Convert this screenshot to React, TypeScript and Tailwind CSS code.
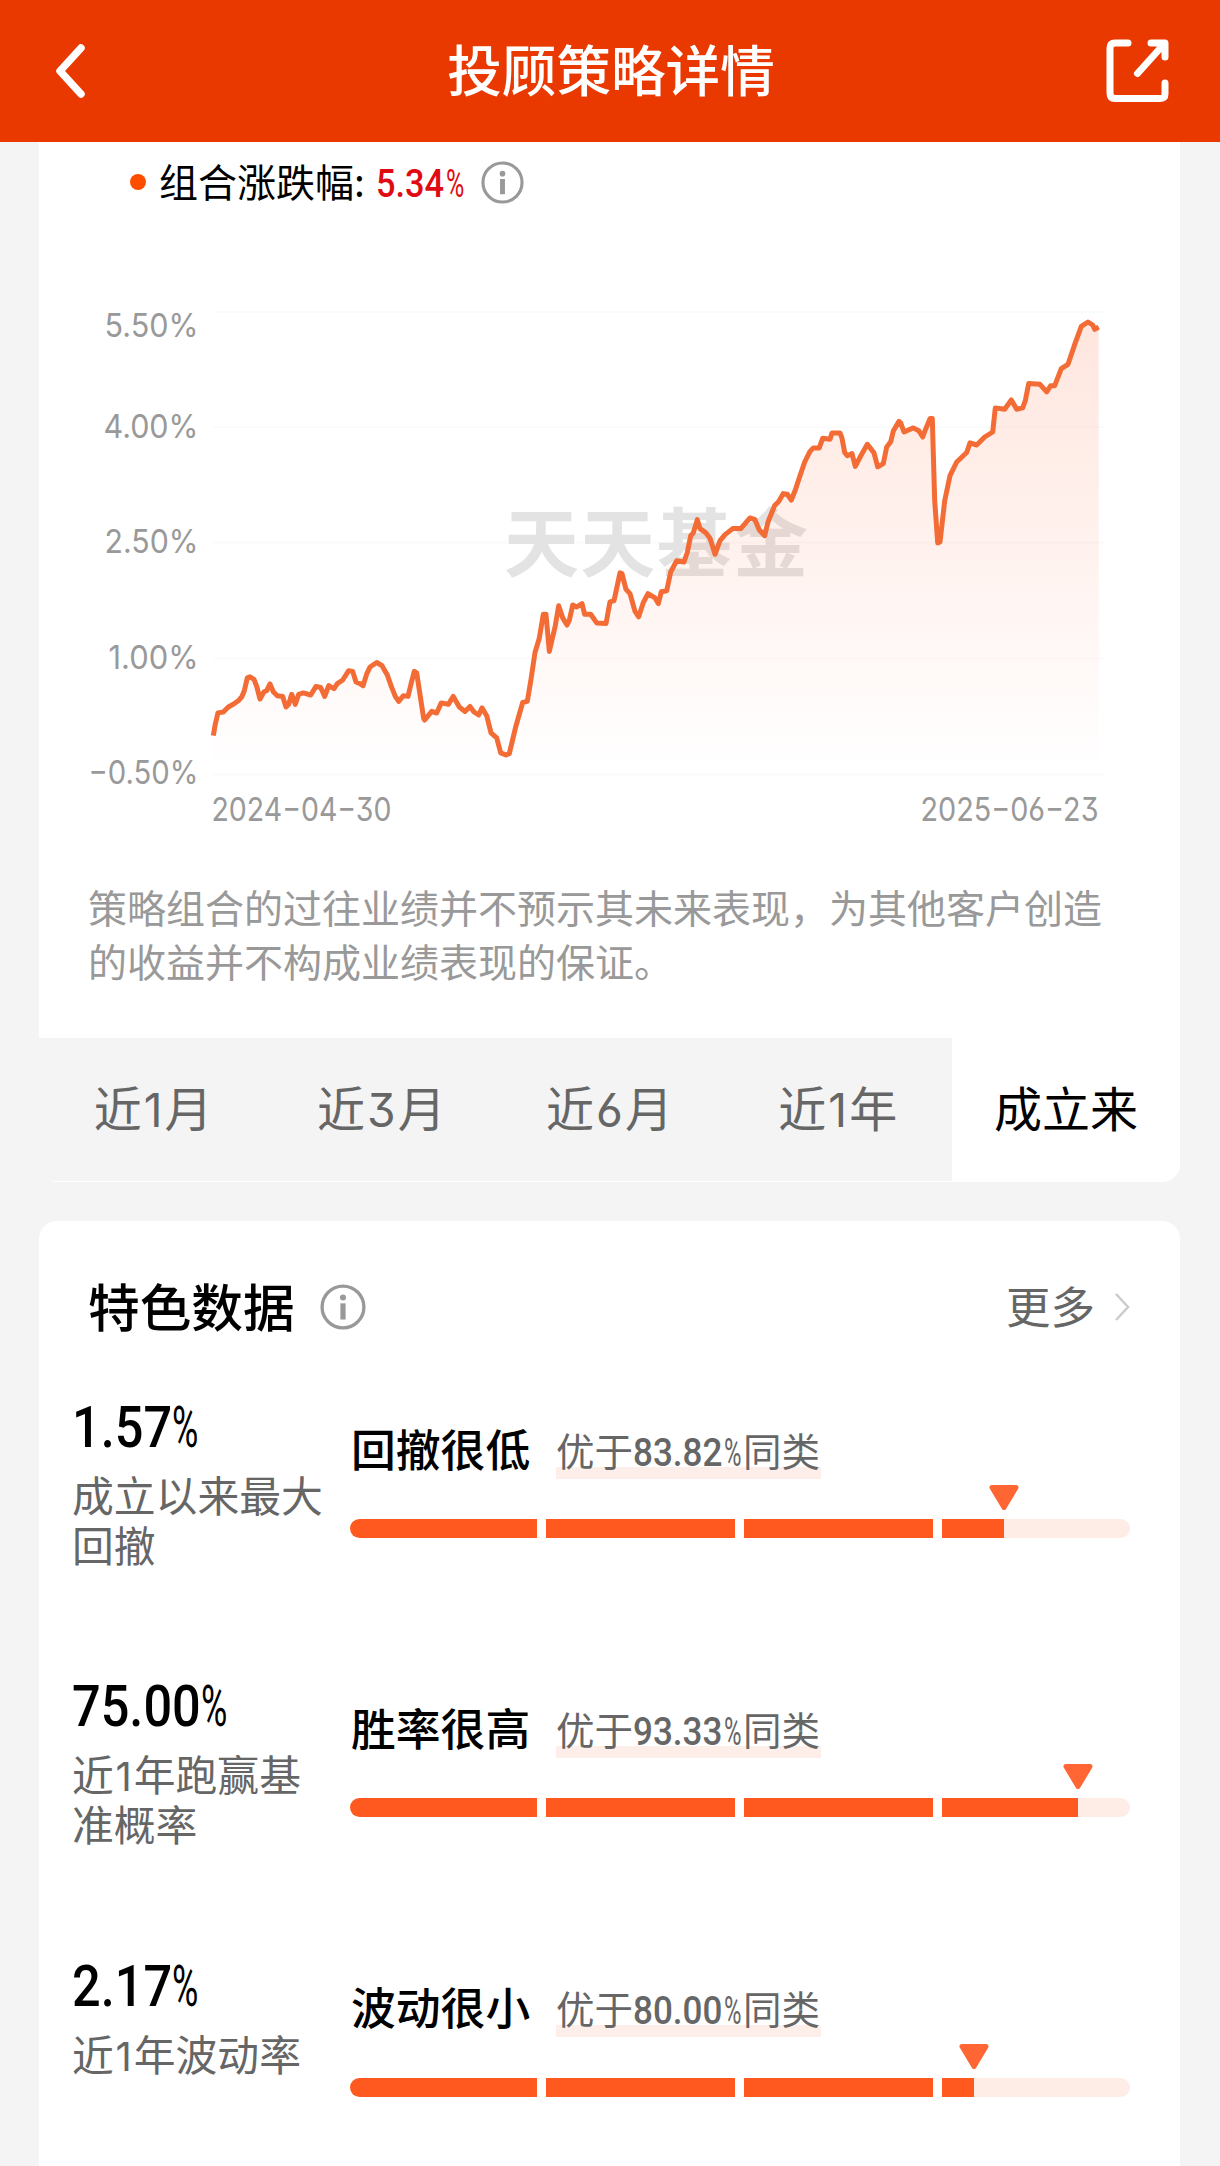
import React from "react";

const POINTS =
  "213.3,735.7 215.3,724 218,712.9 223.3,712 228.3,707 233.3,704.3 238.3,700.7 241.7,697 244.3,690.7 247.3,677.9 250,676.8 254,679.3 256.7,686.4 260,699 264,691.8 266.7,690.7 270,683.9 273.3,691.8 277.3,695.7 282.7,696.4 286,707 288.7,704.3 291.7,694.3 295.3,704.3 298.7,694.3 303.3,692.9 310.7,695 316,686.4 320.7,687.5 324.7,696.4 328.7,685.7 334,688.6 337.3,683.6 342.7,680 348.7,670.7 352.7,671.4 356,682 360,683.6 363,685.7 366.7,673.9 370,667 376.7,662.5 382,665.7 387.3,675 391.3,686.4 395.3,696.4 398.7,701.4 403.3,695.7 408,696.4 411.3,682.9 414.3,671.4 416.7,672.9 419.3,690 423.7,718.6 424.7,720 431.7,711.4 436.7,713 441.3,702.9 448.3,704.3 453.3,696.4 459.3,707 465,711.4 470,706.4 474,712 478.7,715 482,707.9 486.7,715.7 491,732.9 496.7,737.9 500.7,752.9 506,755 509.3,753.6 516,725.7 522.7,702.5 527.3,701.4 531,679.3 535,652.5 539.3,638.2 543.3,614.3 546,614.3 549.3,651.4 555.3,625.7 558.7,605.7 562.7,617.9 567,625 569.3,620.4 572.7,605 576.7,607 582,603.6 584.7,614.3 590.7,614.3 596.7,622.9 606,623.6 610,601.8 614,600.7 620,572.9 622,573.6 626,589.3 630,593.6 635,611.4 638.7,616.8 643.3,602.5 648,593.6 655,597.9 658.3,603.6 661.3,591.8 666.7,590.7 670.7,572 676.7,560.7 684,562 687.3,552.5 690.7,535.7 693.3,532.9 697.3,519.6 700,528.6 706,532.9 710,538.2 715,554.3 720,540.7 725,534.6 732.7,528.6 740.7,528.6 750,517.9 754.7,519.3 759.3,530 764.7,535.7 768,522 774.7,505.4 778.7,501.4 783.3,493.6 787.3,494.3 791.3,500 795.3,490 800,475.7 804.7,462 810,451.4 813.3,447.9 819.3,447.9 822.7,438.2 830,439.3 832,432.9 840,432.9 842,438.2 844.7,452.5 847.3,455.7 852,453.6 855.3,466.4 860.7,456 867.3,444.3 874,452.9 877.7,466.8 883.3,463.6 886.7,447 890.7,441.8 893.3,431 899,421.4 900.7,422.9 904,432 913.3,427.9 918.7,430.7 922.7,437 925.3,430 930,418.6 932.3,418.6 934.7,500.7 937.7,542.9 940,542 944.7,500.7 950,475.7 956.7,462 966.7,452.5 970,442.9 976.7,445 984.7,437 992.7,432 995.3,407.9 1004.7,409.3 1011.3,400 1016.7,409.3 1022.7,407.9 1025.3,400.7 1028.7,383.6 1040,384.3 1046.7,391.8 1050.7,385.7 1054.7,385.7 1061.3,368.6 1068,364.3 1075,343.6 1081.3,326.4 1088,322 1092.7,325 1094.7,329.3 1098.7,327";

const Y_LABELS = [
  { text: "5.50%", y: 337, width: 94 },
  { text: "4.00%", y: 437.5, width: 95 },
  { text: "2.50%", y: 553, width: 94 },
  { text: "1.00%", y: 668.5, width: 90 },
  { text: "−0.50%", y: 784, width: 110 },
];

const GRID = [312, 427, 542.5, 658.5, 774.5];

const TABS = ["近1月", "近3月", "近6月", "近1年", "成立来"];

const ROWS = [
  { value: "1.57", wide: false, label: ["成立以来最大", "回撤"], title: "回撤很低", better: "83.82", fill: 83.82 },
  { value: "75.00", wide: true, label: ["近1年跑赢基", "准概率"], title: "胜率很高", better: "93.33", fill: 93.33 },
  { value: "2.17", wide: false, label: ["近1年波动率"], title: "波动很小", better: "80.00", fill: 80 },
];

function InfoIcon({ className }: { className: string }) {
  return (
    <svg className={className} viewBox="0 0 44 44" fill="none">
      <circle cx="22" cy="22" r="20" stroke="#999" strokeWidth="3.2" />
      <circle cx="22" cy="13" r="2.9" fill="#999" />
      <path d="M22 18.5V34" stroke="#999" strokeWidth="5" />
    </svg>
  );
}

/** Sets Arabic digits inside Chinese text in a geometric face. */
function Mixed({ text }: { text: string }) {
  return (
    <>
      {text.split(/(\d+)/).map((part, i) =>
        /^\d+$/.test(part) ? (
          <span
            key={i}
            className="mx-[0.045em] font-['Inter'] text-[0.96em] leading-none [font-feature-settings:'cv09','cv03']"
          >
            {part}
          </span>
        ) : (
          part
        ),
      )}
    </>
  );
}

function Chart() {
  return (
    <svg className="block h-[620px] w-[1141px]" viewBox="39 220 1141 620">
      <defs>
        <linearGradient id="area" gradientUnits="userSpaceOnUse" x1="0" y1="322" x2="0" y2="770">
          <stop offset="0" stopColor="#ff5a28" stopOpacity="0.15" />
          <stop offset="0.5" stopColor="#ff5a28" stopOpacity="0.08" />
          <stop offset="1" stopColor="#ff5a28" stopOpacity="0" />
        </linearGradient>
      </defs>
      {GRID.map((y) => (
        <path key={y} d={`M213 ${y}H1104`} stroke="#fbfbfb" strokeWidth="2" />
      ))}
      <text
        x="504"
        y="571"
        textLength="304"
        fill="#e3e3e3"
        className="font-['Noto_Sans_CJK_SC',sans-serif] text-[75px] font-bold"
      >
        天天基金
      </text>
      <polygon points={`213.3,770 ${POINTS} 1098.7,770`} fill="url(#area)" />
      <polyline points={POINTS} fill="none" stroke="#f36c36" strokeWidth="5" strokeLinejoin="round" />
      <g
        fill="#999"
        className="font-['Inter',sans-serif] text-[32.5px] [font-feature-settings:'cv09','cv03']"
      >
        {Y_LABELS.map((l) => (
          <text key={l.text} x="198.500" y={l.y} textAnchor="end" textLength={l.width} lengthAdjust="spacingAndGlyphs">
            {l.text}
          </text>
        ))}
        <text x="211.500" y="821" textLength="180" lengthAdjust="spacingAndGlyphs">
          2024−04−30
        </text>
        <text x="920.500" y="821" textLength="178" lengthAdjust="spacingAndGlyphs">
          2025−06−23
        </text>
      </g>
    </svg>
  );
}

function Bar({ fill }: { fill: number }) {
  return (
    <div className="mt-[7.500px] w-[780px]">
      <div className="h-[25px]" style={{ paddingLeft: `${fill}%` }}>
        <svg className="-ml-[15px] h-[25px] w-[30px]" viewBox="0 0 30 25">
          <path d="M3 2.5H27L15 22.5Z" fill="#ff6633" stroke="#ff6633" strokeWidth="5" strokeLinejoin="round" />
        </svg>
      </div>
      <div className="mt-[9px] grid h-[19px] grid-cols-[187px_189px_189px_188px] gap-[9px] overflow-hidden rounded-full">
        {[
          [0, 187],
          [196, 189],
          [394, 189],
          [592, 188],
        ].map(([start, width]) => (
          <div key={start} className="bg-[#fdede6]">
            <div
              className="h-full bg-[#ff591f]"
              style={{ width: Math.max(0, Math.min(width, (fill / 100) * 780 - start)) }}
            />
          </div>
        ))}
      </div>
    </div>
  );
}

export default function App() {
  return (
    <div className="h-[2166px] w-[1220px] overflow-hidden bg-[#f4f4f4] font-['Noto_Sans_CJK_SC',sans-serif] text-black">
      <header className="flex h-[142px] items-center justify-between bg-[#e93800] pl-[52px] pr-[48px] text-white">
        <svg className="h-[60px] w-[68px]" viewBox="0 0 68 60" fill="none">
          <path d="M29 7L8 30L29 53" stroke="#fff" strokeWidth="7.5" strokeLinecap="round" strokeLinejoin="round" />
        </svg>
        <h1 className="pb-[7px] text-[54.600px] font-medium leading-[80px]">投顾策略详情</h1>
        <svg className="mb-[3px] h-[70px] w-[70px]" viewBox="0 0 70 70" fill="none">
          <path
            d="M26 8H13Q8 8 8 13V58Q8 63.500 13 63.500H57.500Q63 63.500 63 59V48M49 8H63V22M62 9L35.500 38.500"
            stroke="#fff"
            strokeWidth="7"
            strokeLinecap="round"
            strokeLinejoin="round"
          />
        </svg>
      </header>

      <main className="pl-[39px] pr-[40px]">
        <section className="overflow-hidden rounded-b-[18px] bg-white">
          <div className="flex h-[78px] items-center pl-[91px]">
            <span className="mt-[2px] size-[16px] rounded-full bg-[#ff4d00]" />
            <p className="ml-[13px] mt-[2px] flex items-baseline whitespace-nowrap text-[39px] leading-[60px]">
              组合涨跌幅:
              <span className="ml-[11px] flex font-['Roboto'] font-medium text-[#e00b12]">
                <span className="w-[70px] origin-left scale-x-[0.88]">5.34</span>
                <span className="w-[18px] origin-left scale-x-[0.64] font-normal">%</span>
              </span>
            </p>
            <InfoIcon className="ml-[17px] mt-[2px] size-[43px]" />
          </div>
          <Chart />
          <p className="pl-[49px] pt-[40px] text-[39px] leading-[53.7px] text-[#999]">
            策略组合的过往业绩并不预示其未来表现，为其他客户创造
            <br />
            的收益并不构成业绩表现的保证。
          </p>
          <nav className="mt-[50.600px] grid h-[144px] grid-cols-5 pb-px text-[48px]">
            {TABS.map((t, i) => (
              <div
                key={t}
                className={
                  i === 4
                    ? "flex items-center justify-center bg-white pb-[8px] text-black"
                    : "flex items-center justify-center bg-[#f4f4f4] pb-[8px] text-[#666]"
                }
              >
                <span className="whitespace-nowrap">
                  <Mixed text={t} />
                </span>
              </div>
            ))}
          </nav>
        </section>

        <section className="mt-[39px] h-[1000px] rounded-t-[18px] bg-white">
          <div className="flex h-[168px] items-center pl-[49px] pr-[50px]">
            <h2 className="text-[51.700px] font-medium leading-[80px]">特色数据</h2>
            <InfoIcon className="ml-[25px] mt-[3px] size-[46px]" />
            <span className="ml-auto text-[44.500px] leading-[70px] text-[#666]">更多</span>
            <svg className="ml-[19px] mt-[3px] h-[30px] w-[16px]" viewBox="0 0 16 30" fill="none">
              <path d="M2 2L14 15L2 28" stroke="#ccc" strokeWidth="2.500" />
            </svg>
          </div>

          {ROWS.map((r) => (
            <div key={r.title} className="flex h-[279.400px] pl-[33px]">
              <div className="w-[278px] pt-[9px]">
                <div className="flex font-['Roboto'] text-[58px] font-medium leading-[59px]">
                  <span
                    className={
                      r.wide ? "w-[129px] origin-left scale-x-[0.87]" : "w-[100px] origin-left scale-x-[0.87]"
                    }
                  >
                    {r.value}
                  </span>
                  <span className="w-[28px] origin-left scale-x-[0.62] font-normal">%</span>
                </div>
                <p className="mt-[12px] text-[41.800px] leading-[50px] text-[#666]">
                  {r.label.map((line) => (
                    <span key={line} className="block whitespace-nowrap">
                      <Mixed text={line} />
                    </span>
                  ))}
                </p>
              </div>
              <div className="pt-[28.500px]">
                <div className="flex h-[60px] items-baseline pl-[1px] leading-[60px]">
                  <h3 className="text-[44.800px] font-medium">{r.title}</h3>
                  <div className="relative ml-[25.800px] flex w-[265px] items-baseline whitespace-nowrap text-[38.500px] text-[#666]">
                    <span className="absolute bottom-[5px] left-0 h-[12px] w-full bg-[#fdeee9]" />
                    <span className="relative bottom-[1px]">优于</span>
                    <span className="relative bottom-[1px] flex font-['Roboto'] font-medium">
                      <span className="w-[91px] origin-left scale-x-[0.91]">{r.better}</span>
                      <span className="w-[19px] origin-left scale-x-[0.62] font-normal">%</span>
                    </span>
                    <span className="relative bottom-[1px]">同类</span>
                  </div>
                </div>
                <Bar fill={r.fill} />
              </div>
            </div>
          ))}
        </section>
      </main>
    </div>
  );
}
